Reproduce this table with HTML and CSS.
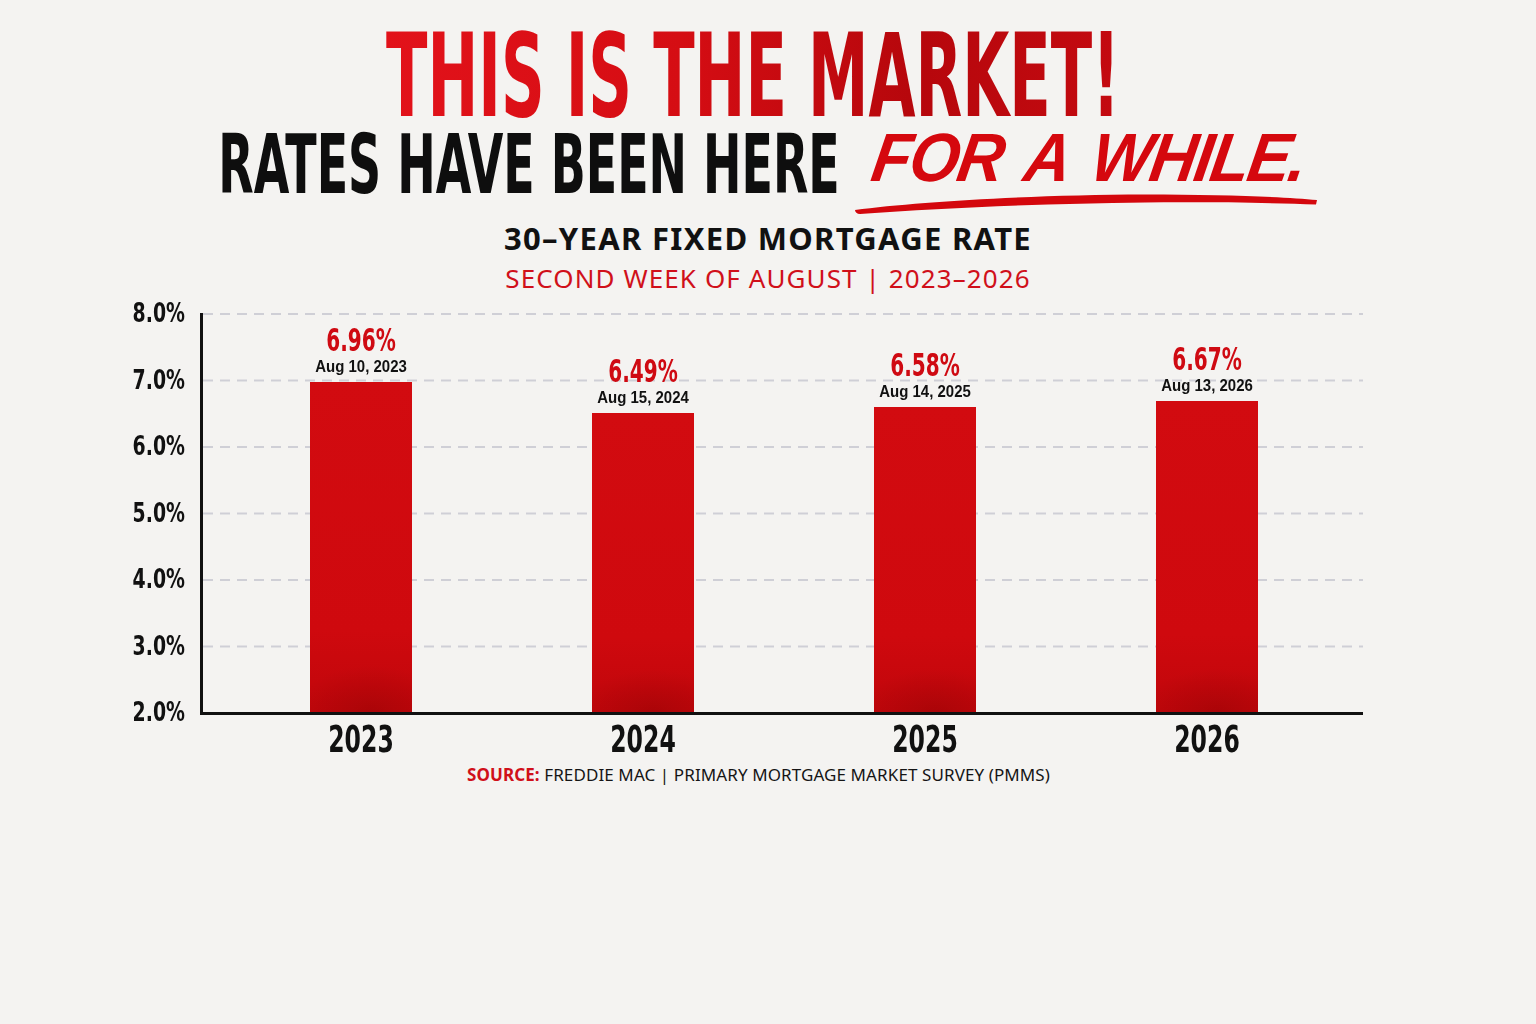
FILE: index.html
```html
<!DOCTYPE html>
<html lang="en">
<head>
<meta charset="utf-8">
<title>This Is The Market</title>
<link rel="stylesheet" href="styles.css">
</head>
<body>
<main class="page">
  <header class="hero">
    <h1 class="title-1"><span class="title-1-text">THIS IS THE MARKET!</span></h1>
    <div class="title-2">
      <span class="rates">RATES HAVE BEEN HERE</span>
      <span class="hand">
        <span class="hand-text">FOR A WHILE.</span>
        <svg class="swoosh" width="463" height="22" viewBox="0 0 463 22" aria-hidden="true">
          <path d="M0 18 C 60 10 170 3 290 2.5 C 370 2.5 430 5 462 8 L 461 12.5 C 420 11 360 10 290 10.5 C 190 11.5 90 16 5 22 C 2 22 0 20 0 18 Z" fill="#d4070d"/>
        </svg>
      </span>
    </div>
    <p class="chart-title">30–YEAR FIXED MORTGAGE RATE</p>
    <p class="chart-sub">SECOND WEEK OF AUGUST | 2023–2026</p>
  </header>

  <section class="chart">
    <div class="ylabels">
      <span>8.0%</span><span>7.0%</span><span>6.0%</span><span>5.0%</span><span>4.0%</span><span>3.0%</span><span>2.0%</span>
    </div>
    <div class="plot">
      <div class="col">
        <span class="value">6.96%</span>
        <span class="date">Aug 10, 2023</span>
        <div class="bar" style="height:329.8px"></div>
      </div>
      <div class="col">
        <span class="value">6.49%</span>
        <span class="date">Aug 15, 2024</span>
        <div class="bar" style="height:298.6px"></div>
      </div>
      <div class="col">
        <span class="value">6.58%</span>
        <span class="date">Aug 14, 2025</span>
        <div class="bar" style="height:304.6px"></div>
      </div>
      <div class="col">
        <span class="value">6.67%</span>
        <span class="date">Aug 13, 2026</span>
        <div class="bar" style="height:310.6px"></div>
      </div>
    </div>
    <div class="years">
      <span>2023</span><span>2024</span><span>2025</span><span>2026</span>
    </div>
  </section>

  <p class="source"><strong>SOURCE:</strong> FREDDIE MAC | PRIMARY MORTGAGE MARKET SURVEY (PMMS)</p>
</main>
</body>
</html>
```

FILE: styles.css
```css
* { box-sizing: border-box; }

html, body {
  margin: 0;
  padding: 0;
}

body {
  width: 1536px;
  height: 1024px;
  overflow: hidden;
  background: #f4f3f1;
  color: #111;
  font-family: "Noto Sans", "Liberation Sans", sans-serif;
}

.page {
  display: flex;
  flex-direction: column;
  align-items: center;
  padding-top: 26px;
}

.hero {
  display: flex;
  flex-direction: column;
  align-items: center;
}

.title-1 {
  margin: 0 30px 0 0;
  display: flex;
  align-items: center;
  height: 100px;
  font-family: "DejaVu Sans Condensed", "Liberation Sans", sans-serif;
  font-weight: 700;
  font-size: 67.5px;
  line-height: 58px;
}

.title-1-text {
  display: block;
  transform: scaleY(1.727);
  transform-origin: 50% 50%;
  background: linear-gradient(90deg, #e2121a 0%, #d50d13 40%, #b6070c 72%, #c40a10 100%);
  -webkit-background-clip: text;
  background-clip: text;
  color: transparent;
  white-space: nowrap;
}

.title-2 {
  display: flex;
  align-items: flex-start;
  gap: 15px;
  height: 80px;
}

.rates {
  display: block;
  align-self: center;
  font-family: "DejaVu Sans Condensed", "Liberation Sans", sans-serif;
  font-weight: 700;
  font-size: 51.1px;
  line-height: 50px;
  color: #0e0e0e;
  transform: scaleY(1.61);
  transform-origin: 50% 50%;
  white-space: nowrap;
}

.hand {
  display: flex;
  flex-direction: column;
  width: 463px;
  margin-top: 4px;
}

.hand-text {
  display: block;
  padding-left: 13px;
  font-family: "Liberation Sans", sans-serif;
  font-style: italic;
  font-weight: 700;
  font-size: 64px;
  line-height: 60px;
  letter-spacing: -1.8px;
  word-spacing: 9px;
  color: #d5080e;
  transform: skewX(-9deg) scaleY(1.07);
  transform-origin: 0 100%;
  white-space: nowrap;
}

.swoosh {
  display: block;
  margin-top: 2px;
}

.chart-title {
  margin: 12px 0 0;
  font-weight: 700;
  font-size: 31px;
  line-height: 40px;
  letter-spacing: 1.3px;
  color: #111;
}

.chart-sub {
  margin: 4px 0 0;
  font-weight: 400;
  font-size: 26px;
  line-height: 32px;
  color: #d0101a;
  letter-spacing: 1.1px;
}

.chart {
  align-self: flex-start;
  margin: 19px 0 0 113px;
  display: grid;
  grid-template-columns: 72px 1163px;
  column-gap: 15px;
}

.ylabels {
  height: 419px;
  margin: -10px 0;
  display: flex;
  flex-direction: column;
  justify-content: space-between;
  align-items: flex-end;
  font-family: "DejaVu Sans Condensed", "Liberation Sans", sans-serif;
  font-weight: 700;
  font-size: 21px;
  line-height: 20px;
  color: #111;
}

.ylabels span {
  display: block;
  height: 20px;
  transform: scaleY(1.3);
}

.plot {
  height: 402px;
  border-left: 3px solid #111;
  border-bottom: 3px solid #111;
  padding: 0 15px 0 17px;
  display: grid;
  grid-template-columns: repeat(4, 282px);
  align-items: end;
  background:
    linear-gradient(to bottom, transparent 0 1.5px, #f4f3f1 1.5px) 0 0 / 100% 66.5px,
    linear-gradient(to right, #cfcfd6 0 10px, transparent 10px) 0 0 / 17px 66.5px;
}

.col {
  display: flex;
  flex-direction: column;
  align-items: center;
  justify-content: flex-end;
  height: 100%;
}

.value {
  display: block;
  font-family: "DejaVu Sans Condensed", "Liberation Sans", sans-serif;
  font-weight: 700;
  font-size: 22.3px;
  line-height: 24px;
  color: #cf0a12;
  margin-bottom: 5px;
  transform: scaleY(1.42);
}

.date {
  display: block;
  font-family: "Liberation Sans", sans-serif;
  font-weight: 700;
  font-size: 15px;
  line-height: 18px;
  color: #111;
  margin-bottom: 7px;
  transform: scaleY(1.1);
}

.bar {
  width: 102px;
  background:
    radial-gradient(ellipse 75% 14% at 60% 100%, rgba(120, 0, 0, 0.3), rgba(120, 0, 0, 0) 100%),
    linear-gradient(to bottom, #d20b10 0%, #cf090e 75%, #c0060b 100%);
}

.years {
  grid-column: 2;
  padding: 0 15px 0 20px;
  margin-top: 4px;
  display: grid;
  grid-template-columns: repeat(4, 282px);
  font-family: "DejaVu Sans Condensed", "Liberation Sans", sans-serif;
  font-weight: 700;
  font-size: 26.2px;
  line-height: 40px;
  color: #111;
  text-align: center;
}

.years span {
  display: block;
  transform: scaleY(1.41);
}

.source {
  margin: 6px 0 0;
  padding-right: 19px;
  font-size: 17px;
  line-height: 20px;
  letter-spacing: 0.1px;
  color: #151515;
}

.source strong {
  color: #d0101a;
  font-weight: 700;
}
```
